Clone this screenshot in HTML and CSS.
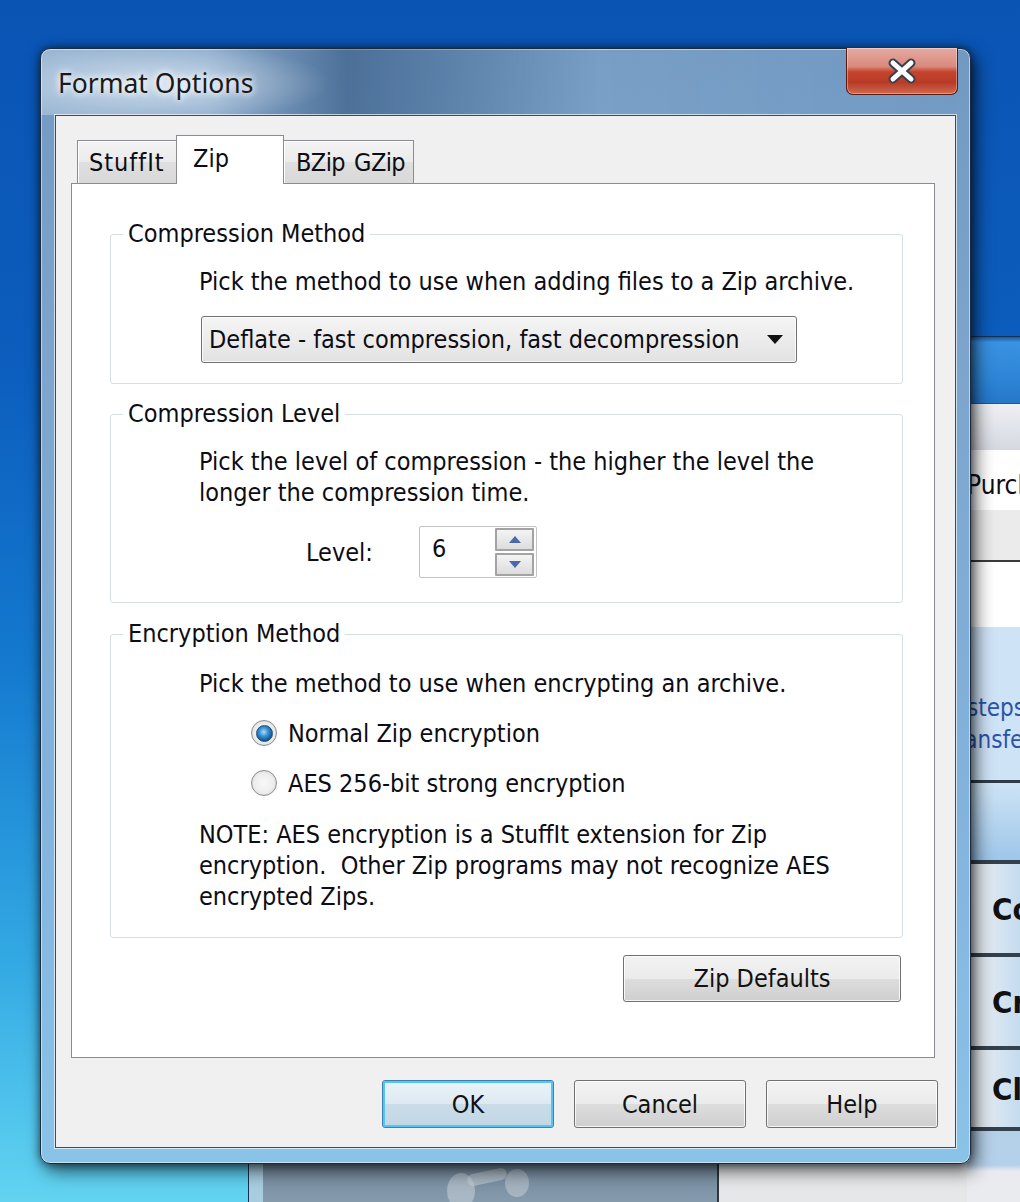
FILE: index.html
```html
<!DOCTYPE html>
<html lang="en">
<head>
  <meta charset="UTF-8" />
  <title>Format Options</title>
  <link rel="stylesheet" href="styles.css">
</head>
<body>

  <div class="desktop">

    <!-- window behind the dialog -->
    <div class="backwin">
      <div class="bw-title"></div>
      <div class="bw-body">
        <div class="bw-side">
          <svg class="bw-icon" width="100" height="50" viewBox="0 0 100 50">
            <ellipse cx="22" cy="32" rx="14" ry="18" fill="#c9d1d8" opacity="0.55"/>
            <rect x="28" y="12" width="40" height="12" rx="6" fill="#c9d1d8" opacity="0.55" transform="rotate(-12 48 18)"/>
            <ellipse cx="78" cy="24" rx="12" ry="14" fill="#c9d1d8" opacity="0.5"/>
          </svg>
        </div>
        <div class="bw-main">
          <div class="bw-center"></div>
          <div class="bw-pane">
            <div class="bw-toolbar"></div>
            <div class="bw-white">Purchase</div>
            <div class="bw-gray"></div>
            <div class="bw-blank"></div>
            <div class="bw-info">
              <p>steps to</p>
              <p class="cut">transfer</p>
            </div>
            <div class="bw-strip"></div>
            <div class="bw-btn first">Continue</div>
            <div class="bw-btn">Create</div>
            <div class="bw-btn last">Close</div>
            <div class="bw-rest"></div>
          </div>
        </div>
      </div>
    </div>

    <!-- Format Options dialog -->
    <div class="dialog">
      <div class="titlebar">
        <span class="title">Format Options</span>
        <div class="close">
          <svg width="32" height="26" viewBox="0 0 32 26">
            <path d="M7 5 L25 21 M25 5 L7 21" stroke="#39414d" stroke-width="9" stroke-linecap="round"/>
            <path d="M7 5 L25 21 M25 5 L7 21" stroke="#ffffff" stroke-width="5" stroke-linecap="round"/>
          </svg>
        </div>
      </div>

      <div class="client">
        <div class="tabs">
          <div class="tab tab-stuffit">StuffIt</div>
          <div class="tab tab-zip active">Zip</div>
          <div class="tab tab-bzip">BZip&nbsp; GZip</div>
        </div>

        <div class="panel">
          <fieldset class="group g-method">
            <legend>Compression Method</legend>
            <div class="group-body">
              <p>Pick the method to use when adding files to a Zip archive.</p>
              <div class="select">
                <span>Deflate - fast compression, fast decompression</span>
                <svg width="16" height="9" viewBox="0 0 16 9"><polygon points="0,0 16,0 8,9" fill="#111"/></svg>
              </div>
            </div>
          </fieldset>

          <fieldset class="group g-level">
            <legend>Compression Level</legend>
            <div class="group-body">
              <p>Pick the level of compression - the higher the level the<br>longer the compression time.</p>
              <div class="level-row">
                <span class="level-label">Level:</span>
                <div class="spin">
                  <span class="spin-value">6</span>
                  <div class="spin-btns">
                    <div class="spin-btn"><svg width="12" height="7" viewBox="0 0 12 7"><polygon points="0,7 12,7 6,0" fill="#4a68ab"/></svg></div>
                    <div class="spin-btn"><svg width="12" height="7" viewBox="0 0 12 7"><polygon points="0,0 12,0 6,7" fill="#4a68ab"/></svg></div>
                  </div>
                </div>
              </div>
            </div>
          </fieldset>

          <fieldset class="group g-encrypt">
            <legend>Encryption Method</legend>
            <div class="group-body">
              <p>Pick the method to use when encrypting an archive.</p>
              <div class="radio-row first"><span class="radio on"></span>Normal Zip encryption</div>
              <div class="radio-row"><span class="radio"></span>AES 256-bit strong encryption</div>
              <p class="note">NOTE: AES encryption is a StuffIt extension for Zip<br>encryption.&nbsp; Other Zip programs may not recognize AES<br>encrypted Zips.</p>
            </div>
          </fieldset>

          <div class="defaults-row">
            <button class="btn wide">Zip Defaults</button>
          </div>
        </div>

        <div class="actions">
          <button class="btn default">OK</button>
          <button class="btn">Cancel</button>
          <button class="btn">Help</button>
        </div>
      </div>
    </div>

  </div>

</body>
</html>
```

FILE: styles.css
```css
* { margin: 0; padding: 0; box-sizing: border-box; }
body {
  background: #0b58b8;
  font-family: "DejaVu Sans Condensed", "DejaVu Sans", sans-serif;
  font-stretch: condensed;
  font-size: 25px;
  color: #0c0c14;
}
.desktop {
  position: relative;
  width: 1020px;
  height: 1202px;
  overflow: hidden;
  background: linear-gradient(180deg, #0a54b4 0%, #0c5dbd 30%, #1479cf 55%, #33a9e3 80%, #62d4f1 100%);
}

/* Back window */
.backwin {
  position: absolute;
  left: 248px; top: 336px;
  width: 1000px; height: 880px;
  display: flex;
  flex-direction: column;
  border: 1px solid #16314f;
  border-radius: 8px 8px 0 0;
  background: linear-gradient(180deg, #7fb6e3, #a8d2ef);
}
.bw-title {
  height: 66px;
  background: linear-gradient(180deg, #1b5a9e 0%, #3a92e2 8%, #2f86d8 60%, #2577c9 100%);
}
.bw-body {
  flex: 1;
  display: flex;
  padding-left: 14px;
  background: linear-gradient(180deg, #9fc6e6, #a9cde0);
}
.bw-side {
  width: 456px;
  flex-shrink: 0;
  display: flex;
  flex-direction: column;
  justify-content: flex-end;
  padding: 0 0 6px 176px;
  background: linear-gradient(180deg, #4a6073 0%, #687f93 90%, #8aa0b1 100%);
  border-right: 2px solid #30373e;
}
.bw-main {
  flex: 1;
  display: flex;
  background: #e6e7e9;
}
.bw-center { width: 246px; flex-shrink: 0; }
.bw-pane {
  flex: 1;
  display: flex;
  flex-direction: column;
  padding-left: 2px;
  white-space: nowrap;
}
.bw-toolbar {
  height: 47px;
  border-top: 1px solid #44505c;
  background: linear-gradient(180deg, #eef0f4, #d5d8e0);
}
.bw-white {
  height: 60px;
  padding-top: 20px;
  background: #fff;
  font-size: 26px;
  line-height: 30px;
}
.bw-gray {
  height: 52px;
  background: #ebebeb;
  border-bottom: 2px solid #3a3a3a;
}
.bw-blank { height: 65px; background: #fff; }
.bw-info {
  height: 156px;
  padding-top: 65px;
  background: #cfe3f7;
  color: #2b54a8;
  font-size: 24px;
  line-height: 32px;
  border-bottom: 3px solid #2d3b48;
}
.bw-info .cut { text-indent: -20px; }
.bw-strip {
  height: 77px;
  background: linear-gradient(180deg, #cde3f5, #9ec7ea);
}
.bw-btn {
  height: 93px;
  display: flex;
  align-items: center;
  padding-left: 25px;
  border-top: 4px solid #33404d;
  background: linear-gradient(90deg, #f4f6f8 0%, #dfe9f2 8%, #a9cdea 30%);
  font-size: 31px;
  font-weight: bold;
  color: #111;
}
.bw-btn.last { height: 85px; border-bottom: 4px solid #33404d; }
.bw-rest {
  flex: 1;
  background: linear-gradient(180deg, #b5d1ea 0, #b5d1ea 34px, #e9ebee 40px);
}

/* Dialog frame */
.dialog {
  position: absolute;
  left: 40px; top: 48px;
  width: 931px; height: 1116px;
  border: 1px solid #1b2b3d;
  border-radius: 10px;
  background: linear-gradient(180deg, #7199c2 0%, #7da5cd 30%, #83b4de 70%, #8ac3e8 100%);
  box-shadow: inset 0 0 0 1px rgba(255, 255, 255, 0.5), 5px 7px 18px rgba(0, 0, 0, 0.6), 0 0 9px rgba(0, 0, 0, 0.55);
}
.titlebar {
  height: 66px;
  display: flex;
  align-items: flex-start;
  border-radius: 9px 9px 0 0;
  background:
    radial-gradient(ellipse 170px 40px at 120px 34px, rgba(255, 255, 255, 0.55), rgba(255, 255, 255, 0) 100%),
    linear-gradient(90deg, rgba(255, 255, 255, 0.3) 0%, rgba(255, 255, 255, 0.2) 18%, rgba(20, 50, 90, 0.4) 33%, rgba(20, 50, 90, 0.25) 43%, rgba(255, 255, 255, 0.05) 60%, rgba(255, 255, 255, 0) 100%);
}
.title {
  margin: 17px 0 0 17px;
  font-family: "Noto Sans", "Open Sans", sans-serif;
  font-stretch: normal;
  font-size: 26.5px;
  line-height: 34px;
  color: #1a1a1a;
  text-shadow: 0 0 10px #fff, 0 0 6px rgba(255, 255, 255, 0.9);
}
.close {
  margin: -1px 12px 0 auto;
  width: 112px;
  height: 47px;
  display: flex;
  align-items: center;
  justify-content: center;
  border: 1px solid #5a1a12;
  border-top: none;
  border-radius: 0 0 7px 7px;
  background: linear-gradient(180deg, #e6aaa0 0%, #d98a7e 40%, #c4432d 52%, #b83b27 75%, #cf6a4e 100%);
  box-shadow: inset 0 0 0 1px rgba(255, 255, 255, 0.35);
}

/* Client area */
.client {
  height: 1033px;
  margin: 0 14px;
  padding: 19px 0 0 15px;
  border: 1px solid #3d4b5a;
  background: #f0f0f0;
  box-shadow: 0 0 0 1px rgba(255, 255, 255, 0.65);
}
.tabs {
  height: 48px;
  display: flex;
  align-items: flex-end;
  margin-left: 6px;
}
.tab {
  height: 43px;
  padding-top: 7px;
  line-height: 30px;
  border: 1px solid #898c95;
  border-bottom: none;
  background: linear-gradient(180deg, #f3f3f3 0%, #ebebeb 50%, #dfdfdf 51%, #d8d8d8 100%);
  box-shadow: inset 1px 1px 0 #fff;
  white-space: nowrap;
}
.tab-stuffit { width: 100px; padding-left: 11px; letter-spacing: 1px; }
.tab-zip { width: 108px; margin-left: -1px; padding-left: 16px; }
.tab-bzip { width: 131px; margin-left: -1px; padding-left: 12px; letter-spacing: -0.6px; word-spacing: -2px; }
.tab.active {
  position: relative;
  z-index: 1;
  height: 49px;
  margin-bottom: -1px;
  padding-top: 8px;
  background: #fff;
  box-shadow: none;
}
.panel {
  width: 864px;
  height: 875px;
  padding: 35px 31px 0 38px;
  border: 1px solid #898c95;
  background: #fff;
}

/* Group boxes */
.group {
  margin: 0;
  padding: 17px 0 20px 0;
  border: 1px solid #d5dfe5;
  border-radius: 3px;
}
.group legend {
  margin-left: 12px;
  padding: 0 5px;
  line-height: 30px;
}
.group-body { padding-left: 88px; }
.group p { line-height: 31px; }
.g-level { margin-top: 15px; padding: 17px 0 24px 0; }
.g-encrypt { margin-top: 16px; padding: 19px 0 25px 0; }

.select {
  width: 596px;
  height: 47px;
  margin: 19px 0 0 2px;
  padding: 0 13px 0 7px;
  display: flex;
  align-items: center;
  justify-content: space-between;
  border: 1px solid #707070;
  border-radius: 3px;
  background: linear-gradient(180deg, #f4f4f4 0%, #ececec 50%, #e2e2e2 100%);
  box-shadow: inset 0 0 0 1px rgba(255, 255, 255, 0.8);
}

.level-row {
  display: flex;
  align-items: center;
  margin-top: 18px;
  padding-left: 107px;
}
.level-label { width: 113px; }
.spin {
  width: 118px;
  height: 52px;
  display: flex;
  border: 1px solid #c2c4c8;
  border-radius: 2px;
  background: #fff;
}
.spin-value {
  flex: 1;
  padding: 6px 0 0 12px;
  line-height: 31px;
}
.spin-btns {
  width: 41px;
  display: flex;
  flex-direction: column;
  gap: 2px;
  padding: 1px 2px 1px 0;
}
.spin-btn {
  flex: 1;
  display: flex;
  align-items: center;
  justify-content: center;
  border: 2px solid #a3a3a3;
  border-radius: 1px;
  background: linear-gradient(180deg, #f4f4f4, #dcdcdc);
}

.radio-row {
  height: 50px;
  display: flex;
  align-items: center;
  padding-left: 52px;
}
.radio-row.first { margin-top: 9px; }
.radio {
  width: 26px;
  height: 26px;
  margin-right: 11px;
  display: flex;
  align-items: center;
  justify-content: center;
  border: 1px solid #8c8c8c;
  border-radius: 50%;
  background: radial-gradient(circle, #f8f8f8 0%, #eeeeee 55%, #c9c9c9 100%);
}
.radio.on::after {
  content: "";
  width: 15px;
  height: 15px;
  border-radius: 50%;
  border: 1px solid #1d4f7a;
  background: radial-gradient(circle at 45% 40%, #a7e0ff 0%, #3c93d4 35%, #135a93 70%, #0a3d6a 100%);
}
.note { margin-top: 11px; }

/* Buttons */
.defaults-row {
  display: flex;
  justify-content: flex-end;
  margin-top: 17px;
  padding-right: 2px;
}
.btn {
  width: 172px;
  height: 48px;
  font: inherit;
  color: #111;
  border: 1px solid #707070;
  border-radius: 3px;
  background: linear-gradient(180deg, #f2f2f2 0%, #ebebeb 50%, #dddddd 51%, #cfcfcf 100%);
  box-shadow: inset 0 0 0 1px rgba(255, 255, 255, 0.8);
}
.btn.wide { width: 278px; height: 47px; }
.btn.default {
  border-color: #3c7fb1;
  background: linear-gradient(180deg, #eaf3f9 0%, #dde9f1 50%, #c9dce8 51%, #c1d6e4 100%);
  box-shadow: inset 0 0 0 2px #54c4f2;
}
.actions {
  display: flex;
  justify-content: flex-end;
  gap: 20px;
  margin-top: 22px;
  padding-right: 17px;
}
```
